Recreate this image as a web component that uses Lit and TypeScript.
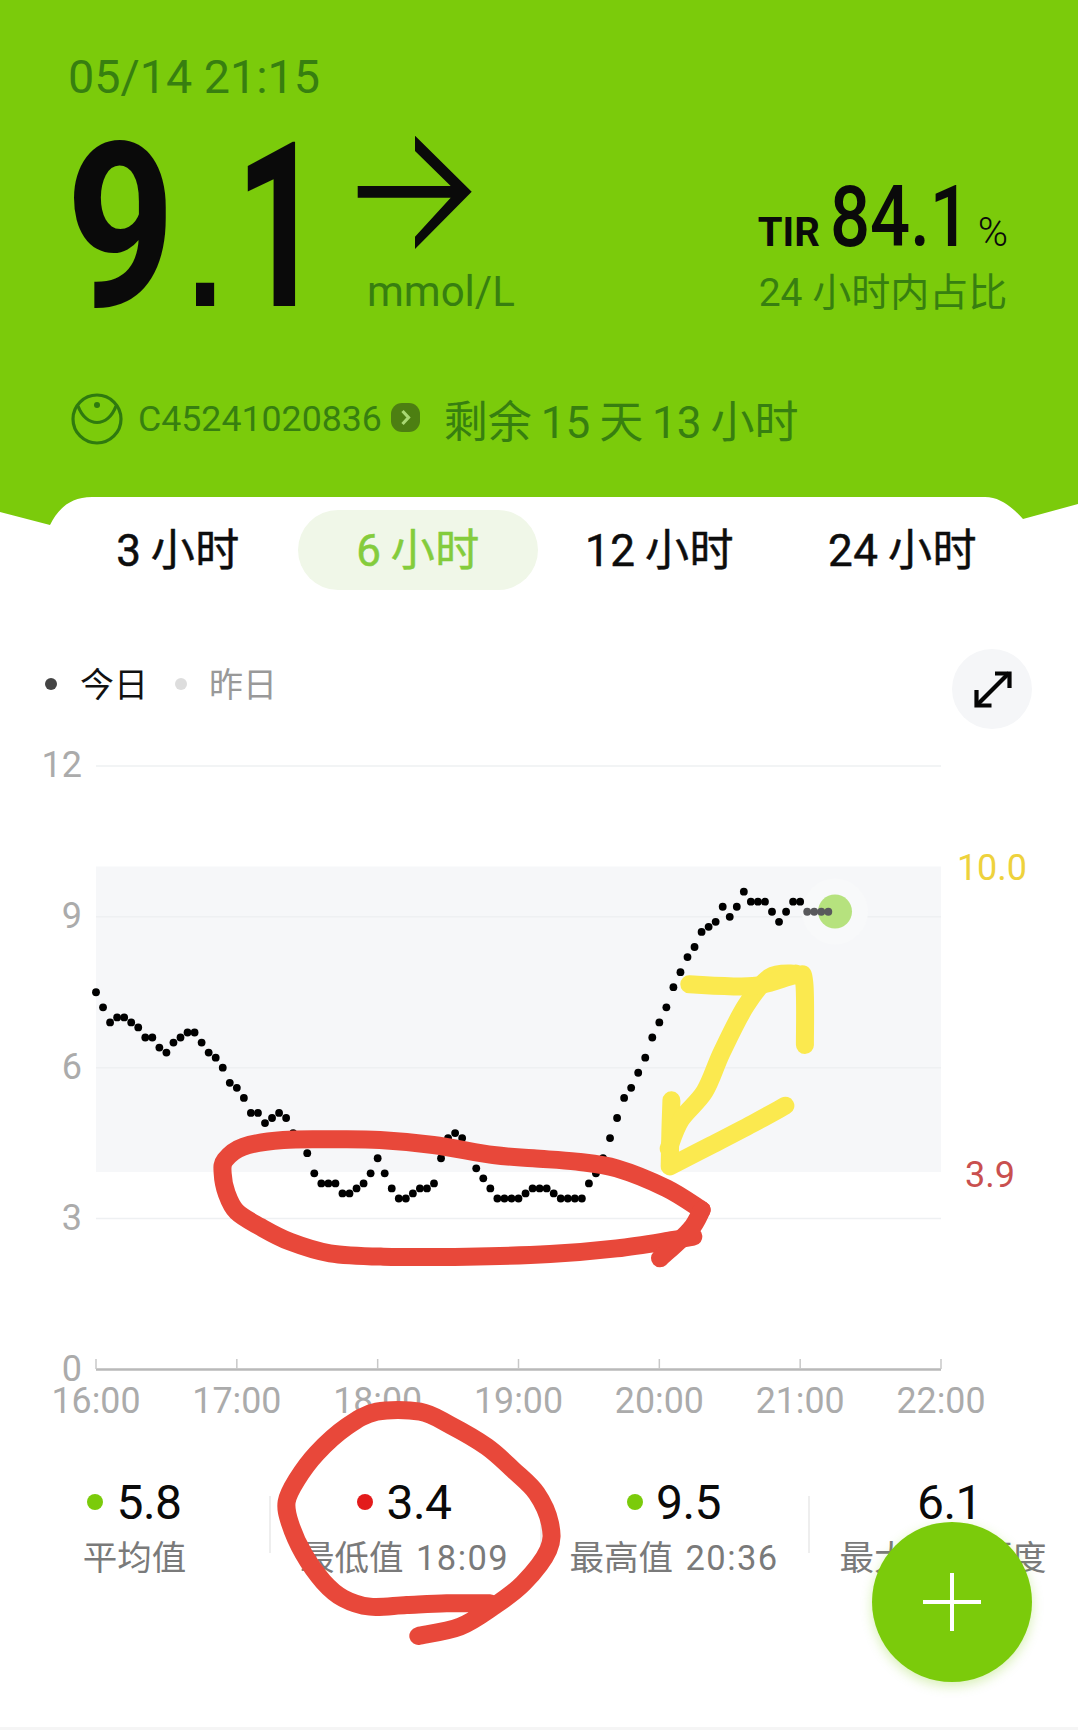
import { LitElement, html, css, svg } from 'lit';
import { customElement } from 'lit/decorators.js';

type Pt = [number, number];

// one reading every 3 minutes from 16:00
const READINGS = [
  7.5, 7.2, 6.9, 7.0, 7.0, 6.9, 6.8, 6.6, 6.6, 6.4, 6.3, 6.5, 6.6, 6.7, 6.7, 6.5, 6.3, 6.2, 6.0, 5.7,
  5.6, 5.4, 5.1, 5.1, 4.9, 5.0, 5.1, 5.0, 4.7, 4.5, 4.3, 3.9, 3.7, 3.7, 3.7, 3.5, 3.5, 3.6, 3.7, 3.9,
  4.2, 3.9, 3.6, 3.4, 3.4, 3.5, 3.6, 3.6, 3.7, 4.2, 4.6, 4.7, 4.6, 4.4, 4.0, 3.8, 3.6, 3.4, 3.4, 3.4,
  3.4, 3.5, 3.6, 3.6, 3.6, 3.5, 3.4, 3.4, 3.4, 3.4, 3.7, 3.9, 4.2, 4.6, 5.0, 5.4, 5.6, 5.9, 6.2, 6.6,
  6.9, 7.2, 7.6, 7.9, 8.2, 8.4, 8.7, 8.8, 8.9, 9.2, 9.0, 9.2, 9.5, 9.3, 9.3, 9.3, 9.1, 8.9, 9.1, 9.3,
  9.3,
];
const PENDING = [9.1, 9.1, 9.1, 9.1];

const X0 = 96;
const X1 = 941;
const toX = (i: number) => X0 + i * ((X1 - X0) / 120);
const toY = (v: number) => 1369.5 - v * 50.3;

const HOURS = ['16:00', '17:00', '18:00', '19:00', '20:00', '21:00', '22:00'];

// catmull-rom through the points, for the hand drawn strokes
const smooth = (p: Pt[]) => {
  let d = `M${p[0][0]} ${p[0][1]}`;
  for (let i = 0; i < p.length - 1; i++) {
    const a = p[Math.max(i - 1, 0)];
    const b = p[i];
    const c = p[i + 1];
    const e = p[Math.min(i + 2, p.length - 1)];
    const c1x = b[0] + (c[0] - a[0]) / 6;
    const c1y = b[1] + (c[1] - a[1]) / 6;
    const c2x = c[0] - (e[0] - b[0]) / 6;
    const c2y = c[1] - (e[1] - b[1]) / 6;
    d += `C${c1x} ${c1y} ${c2x} ${c2y} ${c[0]} ${c[1]}`;
  }
  return d;
};

const fromCrop = (pts: Pt[], x: number, y: number, sx: number, sy: number) =>
  pts.map(([a, b]): Pt => [x + a / sx, y + b / sy]);

const oval = fromCrop([
  [1505, 300], [1400, 235], [1250, 175], [1130, 155], [1000, 145], [880, 135], [700, 105], [540, 90],
  [400, 88], [250, 90], [130, 110], [75, 150], [68, 190], [80, 250], [110, 305], [180, 350], [270, 395],
  [390, 430], [550, 440], [800, 440], [1050, 432], [1250, 415], [1420, 390], [1480, 380],
], 200, 1110, 3, 3);
const ovalTail = fromCrop([[1505, 300], [1470, 360], [1380, 445]], 200, 1110, 3, 3);

const ring = fromCrop([
  [690, 640], [560, 640], [440, 645], [330, 650], [250, 625], [190, 575], [130, 490], [90, 400], [80, 335],
  [110, 270], [170, 190], [260, 110], [350, 65], [480, 65], [570, 105], [680, 170], [760, 240], [830, 310],
  [870, 400], [865, 480], [790, 580], [700, 650], [600, 710], [475, 738],
], 260, 1390, 3, 3);

const yellow = [
  [[383, 1345], [380, 1430], [378, 1525]],
  [[378, 1530], [500, 1470], [620, 1410], [715, 1360]],
  [[375, 1480], [410, 1400], [480, 1320], [530, 1210], [600, 1080], [670, 1000], [745, 990]],
  [[435, 1020], [620, 1025], [745, 995], [770, 1015], [772, 1190]],
].map(s => fromCrop(s as Pt[], 540, 620, 2.914, 2.8));

@customElement('app-root')
export class AppRoot extends LitElement {
  static styles = css`
    :host {
      display: block;
      position: relative;
      width: 1078px;
      height: 1730px;
      overflow: hidden;
      background: #fff;
      font-family: Roboto, "Noto Sans CJK SC", sans-serif;
      color: #111;
    }
    .page { display: flex; flex-direction: column; height: 100%; }

    .header {
      box-sizing: border-box;
      height: 497px;
      padding: 54px 70px 0 68px;
      background: #7bcb0b;
      color: #377f10;
    }
    .date { font-size: 46.7px; line-height: 46px; }
    .hero { display: flex; margin-top: 43px; height: 170px; }
    .value {
      width: 291px;
      margin-left: -2px;
      font-size: 230px;
      line-height: 170px;
      font-weight: 700;
      color: #0a0a0a;
      transform: scaleX(0.83);
      transform-origin: left;
      white-space: nowrap;
    }
    .value .point { font-family: "Liberation Sans", sans-serif; font-size: 155px; margin: 0 15px 0 14px; }
    .value .one { display: inline-block; transform: scaleX(0.8); transform-origin: left; }
    .trend { display: flex; flex-direction: column; }
    .arrow { display: block; flex: none; margin-top: -7px; }
    .unit { flex: none; margin: 15px 0 0 10px; font-size: 42px; line-height: 50px; }
    .tir { margin-left: auto; margin-top: 36px; }
    .tir-top { display: flex; align-items: baseline; color: #0a0a0a; height: 76px; line-height: 76px; }
    .tir-label { font-size: 40px; font-weight: 700; width: 72px; margin-left: -1px; }
    .tir-num {
      width: 148px;
      font-size: 86px;
      font-weight: 500;
      transform: scaleX(0.82);
      transform-origin: left;
      white-space: nowrap;
    }
    .tir-pct { font-size: 41px; font-weight: 300; }
    .tir-sub { margin-top: 13px; font-size: 39px; line-height: 50px; white-space: nowrap; }

    .sensor { display: flex; align-items: center; margin-top: 81px; margin-left: 3px; height: 50px; }
    .sensor-icon { display: block; }
    .sensor-code { margin-left: 15px; font-size: 35.7px; }
    .badge { margin: -4px 0 0 9px; display: block; }
    .remain { margin-left: 24px; font-size: 44px; word-spacing: -2px; white-space: nowrap; }

    .tabs {
      position: relative;
      display: grid;
      grid-template-columns: 240px 240px 243px 243px;
      padding: 13px 0 0 58px;
      height: 80px;
    }
    .wedge { position: absolute; left: 0; top: 0; }
    .tab {
      position: relative;
      height: 80px;
      border-radius: 40px;
      text-align: center;
      font-size: 44px;
      line-height: 82px;
      letter-spacing: 0.5px;
      word-spacing: -2px;
      color: #0d0d0d;
      -webkit-text-stroke: 0.5px currentColor;
    }
    .tab.on { background: #f0f7e8; color: #84cc3c; }

    .legend {
      display: flex;
      align-items: center;
      height: 80px;
      margin-top: 59px;
      padding: 0 46px 0 45px;
      font-size: 34px;
    }
    .legend-txt { margin-bottom: 13px; }
    .dot { width: 12px; height: 12px; border-radius: 50%; background: #444; margin: 0 23px 10px 0; }
    .dot.old { background: #ddd; margin: 0 22px 10px 27px; }
    .old { color: #999; }
    .expand {
      margin-left: auto;
      width: 80px;
      height: 80px;
      border-radius: 50%;
      background: #f5f6f8;
    }
    .expand svg { display: block; }

    .chart { display: block; width: 1078px; height: 704px; margin-top: -3px; }
    .band { fill: #f6f7f9; }
    .grid { stroke: #eef0f2; stroke-width: 1.5; }
    .axis { stroke: #b9b9b9; stroke-width: 2.5; }
    .tick { stroke: #c8c8c8; stroke-width: 1.5; }
    .lab { font-size: 36px; fill: #ababab; }
    .high { fill: #eed23c; }
    .low { fill: #c9504f; }
    .pt { fill: #000; }
    .pt.pending { fill: #59595c; }
    .now { fill: #b6e27e; }
    .halo { fill: #f8f9fa; }

    .stats { display: grid; grid-template-columns: 269px 271px 268px 270px; margin-top: 48px; }
    .stat { position: relative; text-align: center; white-space: nowrap; }
    .stat + .stat::before {
      content: '';
      position: absolute;
      left: 0;
      top: 18px;
      height: 57px;
      width: 1.5px;
      background: #eee;
    }
    .stat-val {
      display: flex;
      align-items: center;
      justify-content: center;
      gap: 13px;
      height: 48px;
      font-size: 48px;
      letter-spacing: -0.5px;
      color: #0a0a0a;
    }
    .stat-val.plain { padding-left: 13px; }
    .stat-dot { width: 16px; height: 16px; border-radius: 50%; }
    .ok { background: #7bcb0b; }
    .bad { background: #e31b1b; }
    .stat-lab { margin-top: 12px; font-size: 34.5px; line-height: 40px; color: #7a7a7a; }
    .stat-time { margin-left: 4px; letter-spacing: 1.4px; }

    .foot { margin-top: auto; height: 3px; background: #f5f5f5; }

    .fab {
      position: absolute;
      left: 872px;
      top: 1522px;
      width: 160px;
      height: 160px;
      border-radius: 50%;
      background: #7bcb0b;
      box-shadow: 0 4px 12px rgba(123, 203, 11, 0.3);
    }
    .fab svg { display: block; }

    .marks { position: absolute; left: 0; top: 0; pointer-events: none; }
    .marks path { fill: none; stroke-width: 18; stroke-linecap: round; stroke-linejoin: round; }
    .red { stroke: #e8483a; }
    .yellow { stroke: #fbe94f; }
  `;

  private chart() {
    return svg`
      <rect class="band" x=${X0} y="866.5" width=${X1 - X0} height="305.5"></rect>
      ${[12, 9, 6, 3].map(v => svg`<line class="grid" x1=${X0} x2=${X1} y1=${toY(v)} y2=${toY(v)}></line>`)}
      ${[12, 9, 6, 3, 0].map(v => svg`<text class="lab" x="82" y=${toY(v) + 11} text-anchor="end">${v}</text>`)}
      <text class="lab high" x="992" y="880" text-anchor="middle">10.0</text>
      <text class="lab low" x="990" y="1187" text-anchor="middle">3.9</text>
      <line class="axis" x1=${X0} x2=${X1} y1="1369.5" y2="1369.5"></line>
      ${HOURS.map((h, i) => {
        const x = toX(i * 20);
        return svg`
          <line class="tick" x1=${x} x2=${x} y1="1359" y2="1369"></line>
          <text class="lab" x=${x} y="1413" text-anchor="middle" textLength="89" lengthAdjust="spacingAndGlyphs">${h}</text>`;
      })}
      <circle class="halo" cx="835" cy="911.5" r="33"></circle>
      <circle class="now" cx="835" cy="911.5" r="17"></circle>
      ${READINGS.map((v, i) => svg`<circle class="pt" cx=${toX(i)} cy=${toY(v)} r="3.9"></circle>`)}
      ${PENDING.map((v, i) => svg`<circle class="pt pending" cx=${toX(READINGS.length + i)} cy=${toY(v)} r="3.9"></circle>`)}
    `;
  }

  private stat(value: string, label: string, time: string, dot?: string) {
    return html`
      <div class="stat">
        <div class="stat-val ${dot ? '' : 'plain'}">${dot ? html`<span class="stat-dot ${dot}"></span>` : ''}${value}</div>
        <div class="stat-lab">${label}${time ? html` <span class="stat-time">${time}</span>` : ''}</div>
      </div>
    `;
  }

  render() {
    return html`
      <div class="page">
        <div class="header">
          <div class="date">05/14 21:15</div>
          <div class="hero">
            <div class="value">9<span class="point">.</span><span class="one">1</span></div>
            <div class="trend">
              <svg class="arrow" width="120" height="116" viewBox="357 136 120 116">
                <path fill="#0a0a0a" d="M357.7 186H450.7L415 151V135.7L471.7 191.7L415 249V236.7L450.7 197.7H357.7Z"></path>
              </svg>
              <div class="unit">mmol/L</div>
            </div>
            <div class="tir">
              <div class="tir-top">
                <span class="tir-label">TIR</span>
                <span class="tir-num">84.1</span>
                <span class="tir-pct">%</span>
              </div>
              <div class="tir-sub">24 小时内占比</div>
            </div>
          </div>
          <div class="sensor">
            <svg class="sensor-icon" width="52" height="52" viewBox="0 0 52 52" fill="none" stroke="#2f7a0f" stroke-width="3.2">
              <circle cx="26" cy="26" r="24"></circle>
              <path d="M7 13C15 35 37 35 45 13"></path>
              <circle cx="26" cy="12" r="3" fill="#2f7a0f" stroke="none"></circle>
            </svg>
            <span class="sensor-code">C45241020836</span>
            <svg class="badge" width="29" height="29" viewBox="0 0 29 29">
              <rect width="29" height="29" rx="11" fill="#4d7f12"></rect>
              <path d="M11.5 8L17.5 14.5L11.5 21" fill="none" stroke="#a9d873" stroke-width="3.2"></path>
            </svg>
            <span class="remain">剩余 15 天 13 小时</span>
          </div>
        </div>

        <div class="tabs">
          <svg class="wedge" width="1078" height="30" viewBox="0 0 1078 30">
            <path fill="#7bcb0b" d="M0 0V15L50 28C58 12 70 0 92 0Z"></path>
            <path fill="#7bcb0b" d="M1078 0V7L1023 22C1012 10 1000 0 985 0Z"></path>
          </svg>
          <div class="tab">3 小时</div>
          <div class="tab on">6 小时</div>
          <div class="tab">12 小时</div>
          <div class="tab">24 小时</div>
        </div>

        <div class="legend">
          <span class="dot"></span><span class="legend-txt">今日</span>
          <span class="dot old"></span><span class="legend-txt old">昨日</span>
          <div class="expand">
            <svg width="80" height="80" viewBox="0 0 80 80" fill="none" stroke="#050505" stroke-width="4.2">
              <path d="M25 56L57 24"></path>
              <path d="M43 24.5H57.5V39"></path>
              <path d="M24.5 41V56.5H39.5"></path>
            </svg>
          </div>
        </div>

        <svg class="chart" viewBox="0 726 1078 704">${this.chart()}</svg>

        <div class="stats">
          ${this.stat('5.8', '平均值', '', 'ok')}
          ${this.stat('3.4', '最低值', '18:09', 'bad')}
          ${this.stat('9.5', '最高值', '20:36', 'ok')}
          ${this.stat('6.1', '最大波动幅度', '')}
        </div>

        <div class="foot"></div>
      </div>

      <div class="fab">
        <svg width="160" height="160" viewBox="0 0 160 160" stroke="#fff" stroke-width="4">
          <path d="M80 51V109M51 80H109"></path>
        </svg>
      </div>

      <!-- hand drawn marks on top of the screenshot -->
      <svg class="marks" width="1078" height="1730" viewBox="0 0 1078 1730">
        ${yellow.map(s => svg`<path class="yellow" d=${smooth(s)}></path>`)}
        <path class="red" d=${smooth(oval)}></path>
        <path class="red" d=${smooth(ovalTail)}></path>
        <path class="red" d=${smooth(ring)}></path>
      </svg>
    `;
  }
}
